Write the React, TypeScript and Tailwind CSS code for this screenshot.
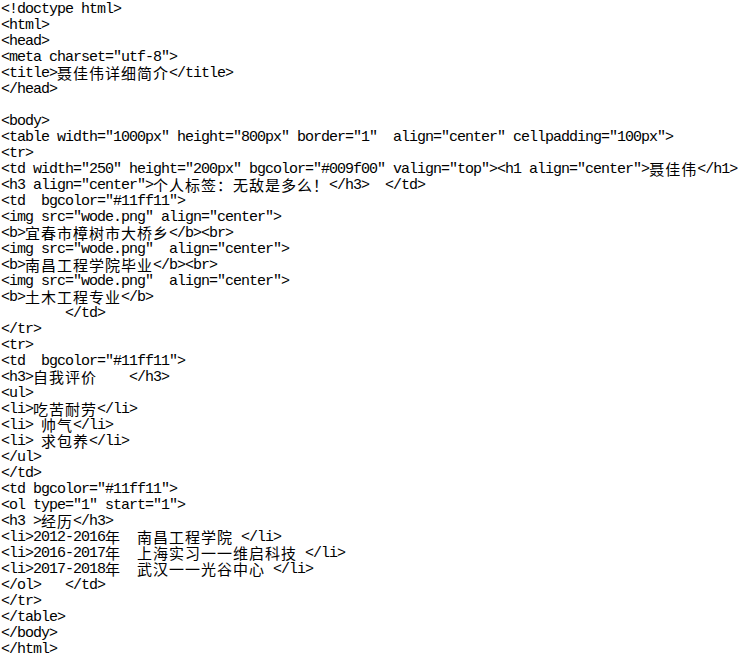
import React from "react";

// source lines shown in the editor screenshot
const lines: string[] = [
  "<!doctype html>",
  "<html>",
  "<head>",
  '<meta charset="utf-8">',
  "<title>聂佳伟详细简介</title>",
  "</head>",
  "",
  "<body>",
  '<table width="1000px" height="800px" border="1"  align="center" cellpadding="100px">',
  "<tr>",
  '<td width="250" height="200px" bgcolor="#009f00" valign="top"><h1 align="center">聂佳伟</h1>',
  '<h3 align="center">个人标签：无敌是多么！</h3>  </td>',
  '<td  bgcolor="#11ff11">',
  '<img src="wode.png" align="center">',
  "<b>宜春市樟树市大桥乡</b><br>",
  '<img src="wode.png"  align="center">',
  "<b>南昌工程学院毕业</b><br>",
  '<img src="wode.png"  align="center">',
  "<b>土木工程专业</b>",
  "        </td>",
  "</tr>",
  "<tr>",
  '<td  bgcolor="#11ff11">',
  "<h3>自我评价    </h3>",
  "<ul>",
  "<li>吃苦耐劳</li>",
  "<li> 帅气</li>",
  "<li> 求包养</li>",
  "</ul>",
  "</td>",
  '<td bgcolor="#11ff11">',
  '<ol type="1" start="1">',
  "<h3 >经历</h3>",
  "<li>2012-2016年  南昌工程学院 </li>",
  "<li>2016-2017年  上海实习一一维启科技 </li>",
  "<li>2017-2018年  武汉一一光谷中心 </li>",
  "</ol>   </td>",
  "</tr>",
  "</table>",
  "</body>",
  "</html>",
];

// split a line into ascii / wide runs so wide chars take two cells
function splitRuns(text: string) {
  const runs: { wide: boolean; text: string }[] = [];
  for (const ch of text) {
    const wide = ch.charCodeAt(0) > 0xff;
    const last = runs[runs.length - 1];
    if (last && last.wide === wide) last.text += ch;
    else runs.push({ wide, text: ch });
  }
  return runs;
}

function CodeLine({ text }: { text: string }) {
  return (
    <div className="h-4 leading-4 whitespace-pre">
      {splitRuns(text).map((r, i) =>
        r.wide ? (
          <span
            key={i}
            className="inline-block h-4 align-top leading-[13px] text-[15px] tracking-[1px] font-['Noto_Sans_CJK_SC',sans-serif]"
          >
            {r.text}
          </span>
        ) : (
          <span key={i}>{r.text}</span>
        )
      )}
    </div>
  );
}

export default function App() {
  return (
    <div className="w-[743px] h-[664px] bg-white text-black pt-[2px] pl-[1px] text-[15px] tracking-[-1px] font-['Liberation_Mono',monospace] overflow-hidden">
      {lines.map((l, i) => (
        <CodeLine key={i} text={l} />
      ))}
    </div>
  );
}
